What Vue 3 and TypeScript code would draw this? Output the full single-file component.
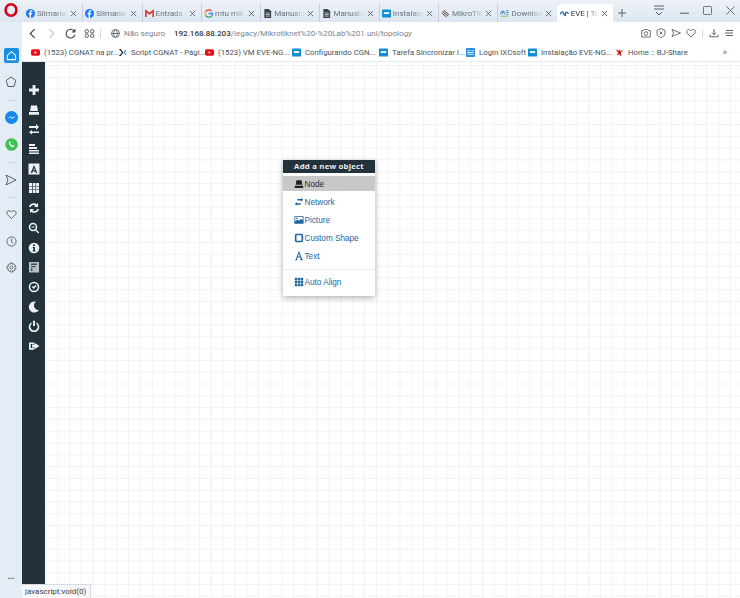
<script setup lang="ts">
interface Tab { title: string; icon: string; active?: boolean }
const tabs: Tab[] = [
  { title: 'Silmaria (', icon: 'fb' },
  { title: 'Silmaria (', icon: 'fb' },
  { title: 'Entrada (', icon: 'gm' },
  { title: 'mtu mik', icon: 'g' },
  { title: 'Manual:M', icon: 'doc' },
  { title: 'Manual:M', icon: 'doc' },
  { title: 'Instalaçã', icon: 'ixc' },
  { title: 'MikroTik', icon: 'mt' },
  { title: 'Downloa', icon: 'dl' },
  { title: 'EVE | Top', icon: 'eve', active: true },
]
const bookmarks = [
  { title: '(1523) CGNAT na pr...', icon: 'yt', w: 87 },
  { title: 'Script CGNAT - Pági...', icon: 'sc', w: 87 },
  { title: '(1523) VM EVE-NG...', icon: 'yt', w: 87 },
  { title: 'Configurando CGN...', icon: 'ixc', w: 87 },
  { title: 'Tarefa Sincronizar I...', icon: 'ixc', w: 87 },
  { title: 'Login IXCsoft', icon: 'lg', w: 62 },
  { title: 'Instalação EVE-NG...', icon: 'ixc', w: 87 },
  { title: 'Home :: BJ-Share', icon: 'bj', w: 80 },
]
const tools = ['plus', 'node', 'net', 'list', 'text', 'grid', 'sync', 'zoom', 'info', 'note', 'check', 'moon', 'power', 'out']
const menu = [
  { label: 'Node', icon: 'node', active: true },
  { label: 'Network', icon: 'net' },
  { label: 'Picture', icon: 'pic' },
  { label: 'Custom Shape', icon: 'shape' },
  { label: 'Text', icon: 'a' },
]
</script>

<template>
  <div class="browser">
    <header class="tabbar">
      <svg class="opera" viewBox="0 0 14 14"><ellipse cx="7" cy="7" rx="5.400" ry="5.700" fill="none" stroke="#d6001c" stroke-width="2.600" /></svg>
      <div class="tabs">
        <div v-for="(t, i) in tabs" :key="i" class="tab" :class="{ active: t.active }">
          <svg class="fav" viewBox="0 0 10 10">
            <template v-if="t.icon === 'fb'">
              <circle cx="5" cy="5" r="5" fill="#1878f2" />
              <path d="M5.600 10V6h1.300l.2-1.500H5.600v-1c0-.5.2-.8.8-.8h.8V1.400C7 1.400 6.600 1.300 6 1.300c-1.200 0-2 .7-2 2.100v1.100H2.800V6H4v4z" fill="#fff" />
            </template>
            <template v-else-if="t.icon === 'gm'">
              <path d="M1 9V2l4 3.200L9 2v7" fill="none" stroke="#d93025" stroke-width="1.700" />
            </template>
            <template v-else-if="t.icon === 'g'">
              <path d="M8.600 2.400A4.300 4.300 0 0 0 1.800 3" fill="none" stroke="#ea4335" stroke-width="1.500" />
              <path d="M1.800 3a4.300 4.300 0 0 0 0 4" fill="none" stroke="#fbbc05" stroke-width="1.500" />
              <path d="M1.800 7a4.300 4.300 0 0 0 6.700.8" fill="none" stroke="#34a853" stroke-width="1.500" />
              <path d="M8.500 7.800c.8-.8 1-1.800.9-2.800H5.200" fill="none" stroke="#4285f4" stroke-width="1.500" />
            </template>
            <template v-else-if="t.icon === 'doc'">
              <path d="M1.500 0h5l2.500 2.500V10H1.500z" fill="#3b4249" />
              <path d="M3 4.500h4.500M3 6.200h4.500M3 7.900h4.500" stroke="#fff" stroke-width=".7" />
            </template>
            <template v-else-if="t.icon === 'ixc'">
              <rect width="10" height="9" y=".5" rx="1" fill="#0e8fd6" />
              <rect x="2" y="3.500" width="6" height="2" fill="#fff" />
            </template>
            <template v-else-if="t.icon === 'mt'">
              <circle cx="5" cy="5" r="4.800" fill="#e6e6e6" />
              <path d="M1.500 2.500 8 8M3.200 1.500 8.800 6.500M1 4.500 6 9" stroke="#333" stroke-width="1" />
            </template>
            <template v-else-if="t.icon === 'dl'">
              <rect y="1" width="10" height="8" fill="#e7eef6" />
              <path d="M.5 6 2 2l1 3 1-3 1.500 4M6.500 2h3M7 4h2.500M7 6h2.500" fill="none" stroke="#3973b5" stroke-width=".9" />
              <path d="M.5 8h9" stroke="#7fb342" stroke-width="1" />
            </template>
            <template v-else>
              <path d="M.5 6C1.500 2.500 3 2.500 4 5s2 3 2 1 1-3.500 3.500-1" fill="none" stroke="#2a5da8" stroke-width="1.500" />
            </template>
          </svg>
          <span class="tab-title">{{ t.title }}</span>
          <svg class="x" viewBox="0 0 8 8"><path d="M1 1l6 6M7 1 1 7" stroke="#555f69" stroke-width="1" /></svg>
        </div>
        <svg class="new" viewBox="0 0 9 9"><path d="M4.500 0v9M0 4.500h9" stroke="#4a535c" stroke-width="1" /></svg>
      </div>
      <div class="win">
        <svg class="w1" viewBox="0 0 12 11"><path d="M1 1h10M1 4h10M3 7l3 3 3-3" fill="none" stroke="#58626c" stroke-width="1" /></svg>
        <svg class="w2" viewBox="0 0 10 10"><path d="M0 8h10" stroke="#58626c" stroke-width="1.200" /></svg>
        <svg class="w2" viewBox="0 0 10 10"><rect x=".5" y=".5" width="9" height="9" rx="1" fill="none" stroke="#58626c" /></svg>
        <svg class="w2" viewBox="0 0 10 10"><path d="M.5.5l9 9M9.500.5l-9 9" stroke="#58626c" stroke-width="1" /></svg>
      </div>
    </header>

    <div class="body">
      <aside class="rail">
        <div class="home">
          <svg viewBox="0 0 12 12"><path d="M1.500 6 6 1.800 10.500 6v4.500h-9z" fill="none" stroke="#fff" stroke-width="1.100" /></svg>
        </div>
        <svg class="r-ic star" viewBox="0 0 12 12"><path d="M6 1l4.800 3.500L9 10.500H3L1.200 4.500z" fill="none" stroke="#555f6b" stroke-width="1" /></svg>
        <span class="sep s1" />
        <svg class="r-ic msg" viewBox="0 0 12 12"><circle cx="6" cy="6" r="6" fill="#1687ef" /><path d="M2.500 7.500 5 4.800l1.700 1.400L9.500 4.500 7 7.300 5.300 5.800z" fill="#fff" /></svg>
        <svg class="r-ic wa" viewBox="0 0 12 12"><circle cx="6" cy="6" r="5.800" fill="#3ec454" /><path d="M4 3.300c-1 1-.4 2.500.8 3.800s2.700 1.900 3.500 1c.5-.6.300-1-.8-1.600-.5-.2-.7.500-1 .4C5.800 6.600 5.300 6 4.900 5.300c-.1-.3.500-.6.400-1-.4-1-.8-1.400-1.300-1z" fill="#fff" /></svg>
        <span class="sep s2" />
        <svg class="r-ic send" viewBox="0 0 12 12"><path d="M1 1l10 5-10 5 2-5z" fill="none" stroke="#555f6b" stroke-width="1" /></svg>
        <span class="sep s3" />
        <svg class="r-ic heart" viewBox="0 0 12 12"><path d="M6 10.500 1.500 6C0 4 1.500 1.800 3.500 1.800 4.800 1.800 5.600 2.600 6 3.300c.4-.7 1.200-1.500 2.500-1.500 2 0 3.500 2.200 2 4.200z" fill="none" stroke="#555f6b" stroke-width="1" /></svg>
        <svg class="r-ic clock" viewBox="0 0 12 12"><circle cx="6" cy="6" r="5" fill="none" stroke="#555f6b" /><path d="M6 3v3.300l2 1.400" fill="none" stroke="#555f6b" /></svg>
        <svg class="r-ic gear" viewBox="0 0 12 12"><circle cx="6" cy="6" r="1.700" fill="none" stroke="#555f6b" stroke-width=".9" /><path d="M5 1h2l.3 1.500 1.300-.6 1.400 1.400-.7 1.300L10.900 5v2l-1.600.4.700 1.300-1.400 1.400-1.300-.7L7 11H5l-.3-1.600-1.300.7L2 8.700l.7-1.300L1.100 7V5l1.600-.4L2 3.300l1.400-1.400 1.300.6z" fill="none" stroke="#555f6b" stroke-width=".9" /></svg>
        <span class="dots">•••</span>
      </aside>

      <main class="main">
        <nav class="toolbar">
          <svg class="nav first" viewBox="0 0 8 10"><path d="M6 1 2 5l4 4" fill="none" stroke="#3d4650" stroke-width="1.100" /></svg>
          <svg class="nav" viewBox="0 0 8 10"><path d="M2 1l4 4-4 4" fill="none" stroke="#c2c8ce" stroke-width="1.100" /></svg>
          <svg class="nav" viewBox="0 0 10 10"><path d="M8.500 3A4 4 0 1 0 9 6M9 1v2.500H6.500" fill="none" stroke="#3d4650" stroke-width="1" /></svg>
          <svg class="nav" viewBox="0 0 10 10"><g fill="none" stroke="#3d4650" stroke-width=".8"><rect x="1" y="1.500" width="3" height="3" rx="1.200" /><rect x="6" y="1.500" width="3" height="3" rx="1.200" /><rect x="1" y="5.500" width="3" height="3" rx="1.200" /><rect x="6" y="5.500" width="3" height="3" rx="1.200" /></g></svg>
          <i class="vr" />
          <svg class="globe" viewBox="0 0 10 10"><g fill="none" stroke="#3d4650" stroke-width=".8"><circle cx="5" cy="5" r="4.400" /><ellipse cx="5" cy="5" rx="2" ry="4.400" /><path d="M.6 5h8.800" /></g></svg>
          <span class="insecure">Não seguro</span>
          <span class="url"><b>192.168.88.203</b>/legacy/Mikrotiknet%20-%20Lab%201.unl/topology</span>
          <div class="actions">
            <svg viewBox="0 0 10 10"><path d="M.7 2.500h2l.7-1h3.200l.7 1h2v6.500H.7z" fill="none" stroke="#4a535c" stroke-width=".8" /><circle cx="5" cy="5.500" r="1.800" fill="none" stroke="#4a535c" stroke-width=".8" /></svg>
            <svg viewBox="0 0 10 10"><path d="M5 .7 9 2.200V6c0 1.800-2 3-4 3.400C3 9 1 7.800 1 6V2.200z" fill="none" stroke="#4a535c" stroke-width=".8" /><path d="M3.500 3.500l3 3M6.500 3.500l-3 3" stroke="#4a535c" stroke-width=".8" /></svg>
            <svg viewBox="0 0 10 10"><path d="M1 1.500 9.500 5 1 8.500 2.500 5z" fill="none" stroke="#4a535c" stroke-width=".8" /></svg>
            <svg viewBox="0 0 10 10"><path d="M5 9 1 5C0 3.300 1 1.500 2.800 1.500 3.900 1.500 4.600 2.200 5 2.800 5.400 2.200 6.100 1.500 7.200 1.500 9 1.500 10 3.300 9 5z" fill="none" stroke="#4a535c" stroke-width=".8" /></svg>
            <i class="vr" />
            <svg viewBox="0 0 10 10"><path d="M5 1v5.500M3 4.700l2 2 2-2M1 6.500v2.300h8V6.500" fill="none" stroke="#4a535c" stroke-width=".9" /></svg>
            <svg viewBox="0 0 10 10"><path d="M2 2.500h7M1 5h8M2 7.500h7" stroke="#4a535c" stroke-width=".9" /></svg>
          </div>
        </nav>

        <div class="bookmarks">
          <div v-for="(b, i) in bookmarks" :key="i" class="bm" :style="{ width: b.w + 'px' }">
            <svg class="fav" viewBox="0 0 10 10">
              <template v-if="b.icon === 'yt'">
                <rect y="1.500" width="10" height="7" rx="1.800" fill="#e8101a" /><path d="M4 3.500v3l2.600-1.500z" fill="#fff" />
              </template>
              <template v-else-if="b.icon === 'sc'">
                <path d="M1 1l3.500 4L1 9h2l3-4-3-4z" fill="#1b2730" /><path d="M9 2.500 6.500 5 9 7.500" fill="none" stroke="#3e9bd8" stroke-width="1.200" />
              </template>
              <template v-else-if="b.icon === 'ixc'">
                <rect y=".5" width="10" height="9" rx="1" fill="#0e8fd6" /><rect x="2" y="3.500" width="6" height="2" fill="#fff" />
              </template>
              <template v-else-if="b.icon === 'lg'">
                <rect width="10" height="10" rx="1" fill="#2f8fd6" /><path d="M1.500 3h3M6 3h2.500M1.500 7h7M1.500 5h7" stroke="#e9f4fb" stroke-width="1" />
              </template>
              <template v-else>
                <path d="M.5 1.500 4 3l1-2 .5 2.500L9.500 2 6.500 5 7 9.500 4.500 7 2 8.500 3.500 5z" fill="#d21a1f" />
              </template>
            </svg>
            <span>{{ b.title }}</span>
          </div>
          <span class="more">»</span>
        </div>

        <section class="canvas">
          <div class="sidebar">
            <svg v-for="name in tools" :key="name" class="tool" viewBox="0 0 12 12" fill="#eef1f3">
              <path v-if="name === 'plus'" d="M4.600 1h2.800v3.600H11v2.800H7.400V11H4.600V7.400H1V4.600h3.600z" />
              <path v-else-if="name === 'node'" d="M3 1.500h6L10 7H2zM1 8h10v2.800H1z" />
              <path v-else-if="name === 'net'" d="M1 3h7V1l3 3-3 3V5H1zM11 8.500H4V7L1 9.200 4 11.500V10h7z" />
              <path v-else-if="name === 'list'" d="M1 1h6v2H1zM1 4h8v2H1zM1 7h10v1.600H1zM1 9.500h10V11H1z" />
              <template v-else-if="name === 'text'">
                <path d="M.5.500h11v11H.500z" />
                <path fill="#22313a" d="M6 2 9.300 10H7.800l-.6-1.600H4.800L4.200 10H2.700zM5.200 7.200h1.600L6 5z" />
              </template>
              <path v-else-if="name === 'grid'" d="M1 1h3v3H1zM4.700 1h2.800v3H4.700zM8.100 1H11v3H8.100zM1 4.600h3v2.800H1zM4.700 4.600h2.800v2.800H4.700zM8.100 4.600H11v2.800H8.100zM1 8.100h3V11H1zM4.700 8.100h2.800V11H4.700zM8.100 8.100H11V11H8.100z" />
              <path v-else-if="name === 'sync'" d="M10 1v4H6l1.500-1.500A3.200 3.200 0 0 0 2.700 5H1a4.800 4.800 0 0 1 7.700-2.800zM2 11V7h4L4.500 8.500A3.200 3.200 0 0 0 9.300 7H11a4.800 4.800 0 0 1-7.700 2.800z" />
              <template v-else-if="name === 'zoom'">
                <circle cx="5" cy="5" r="3.500" fill="none" stroke="#eef1f3" stroke-width="1.600" />
                <path d="M3.500 4.400h3v1.200h-3zM7.700 7l3.600 3.500-1.100 1.100-3.500-3.600z" />
              </template>
              <template v-else-if="name === 'info'">
                <circle cx="6" cy="6" r="5.300" />
                <path fill="#22313a" d="M5 2.500h2v1.600H5zM4.700 5h2.300v3.400h.6v1H4.600v-1h.7V6h-.6z" />
              </template>
              <template v-else-if="name === 'note'">
                <rect x="1" y="1" width="10" height="10.500" fill="#b9c0c4" />
                <path fill="#3e4b53" d="M3 2.500h6v1.400H3zM3 5h4.500v1.300H3zM3 7.300h1.400V10H3z" />
              </template>
              <template v-else-if="name === 'check'">
                <circle cx="6" cy="6" r="4.500" fill="none" stroke="#eef1f3" stroke-width="1.600" />
                <path d="M3.800 6 5 5l.8.8 1.700-1.800L8.600 5 5.800 8z" />
              </template>
              <path v-else-if="name === 'moon'" d="M8 .8A5.500 5.500 0 1 0 11 9A4.500 4.500 0 0 1 8 .8z" />
              <path v-else-if="name === 'power'" d="M5 .8h2v5.200H5zM3.500 2.300v2A3.500 3.500 0 1 0 8.500 4.300v-2a5.300 5.300 0 1 1-5 0z" />
              <path v-else d="M1 2.500h5v1.600H2.700v4H6v1.600H1zM6.500 4.500V2.800L11.500 6 6.500 9.200V7.500H4v-3z" />
            </svg>
          </div>

          <div class="ctx">
            <div class="ctx-head">Add a new object</div>
            <ul class="ctx-list">
              <li v-for="m in menu" :key="m.label" :class="{ on: m.active }">
                <svg class="ctx-ic" viewBox="0 0 12 12" :fill="m.active ? '#222' : '#21669f'">
                  <path v-if="m.icon === 'node'" d="M3 1.500h6L10 7H2zM1 8h10v2.800H1z" />
                  <path v-else-if="m.icon === 'net'" d="M4 2.400h4.500V1L11 3.300 8.500 5.600V4.200H4zM8 7.400H3.500V6L1 8.300l2.500 2.300V9.200H8z" />
                  <path v-else-if="m.icon === 'pic'" fill-rule="evenodd" d="M.5 1.500h11v9H.5zM1.500 2.500v5l2.500-2 2 1.500 2.500-2.500 2 1.800V2.500zM3.500 3a1 1 0 1 1 0 2 1 1 0 0 1 0-2z" />
                  <path v-else-if="m.icon === 'shape'" fill-rule="evenodd" d="M3 1h6a2 2 0 0 1 2 2v6a2 2 0 0 1-2 2H3a2 2 0 0 1-2-2V3a2 2 0 0 1 2-2zM3 2.800v6.400h6V2.800z" />
                  <path v-else d="M6.300.5 9.800 10l1 .4v.8H7.300v-.8l.9-.4-.7-2.200H4.200l-.7 2.200.9.400v.8H1.200v-.8l1-.4L5.500.5zM4.600 6.600h2.500L5.900 3.100z" />
                </svg>
                <span>{{ m.label }}</span>
              </li>
              <li class="div" />
              <li class="align">
                <svg class="ctx-ic" viewBox="0 0 12 12" fill="#21669f"><path d="M1 1h3v3H1zM4.700 1h2.800v3H4.700zM8.100 1H11v3H8.100zM1 4.600h3v2.800H1zM4.700 4.600h2.800v2.800H4.700zM8.100 4.600H11v2.800H8.100zM1 8.100h3V11H1zM4.700 8.100h2.800V11H4.700zM8.100 8.100H11V11H8.100z" /></svg>
                <span>Auto Align</span>
              </li>
            </ul>
          </div>

          <div class="status">javascript:void(0)</div>
        </section>
      </main>
    </div>
  </div>
</template>

<style>
html, body { margin: 0; padding: 0; }
</style>

<style scoped>
.browser { width: 740px; height: 598px; display: flex; flex-direction: column; overflow: hidden; background: #e4ecf5; font-family: Roboto, "Open Sans", sans-serif; color: #4a535c; }
.tabbar { height: 22px; display: flex; align-items: flex-start; flex: none; background: linear-gradient(#edf2f8, #dde6f1); }
.opera { width: 14px; height: 14px; margin: 3px 0 0 4px; flex: none; }
.tabs { display: flex; align-items: flex-start; margin-left: 6px; height: 22px; }
.tab { width: 59.300px; height: 18px; margin-top: 4px; box-sizing: border-box; display: flex; align-items: center; padding: 0 5px 0 2px; border-right: 1px solid #c6cfd9; font-size: 8px; color: #6a747e; }
.tab.active { width: 56px; background: #fff; border: 0; border-radius: 3px 3px 0 0; padding-left: 3px; margin-right: 4px; margin-left: -1px; color: #333; }
.fav { width: 9px; height: 9px; flex: none; }
.tab-title { flex: 1; min-width: 0; margin-left: 2px; white-space: nowrap; -webkit-mask-image: linear-gradient(90deg, #000 60%, transparent 100%); mask-image: linear-gradient(90deg, #000 60%, transparent 100%); }
.x { width: 7px; height: 7px; flex: none; margin-left: 2px; }
.new { width: 8px; height: 8px; margin: 9px 0 0 1px; flex: none; }
.win { display: flex; margin-left: auto; align-items: flex-start; padding: 5px 5px 0 0; gap: 14px; }
.w1 { width: 12px; height: 11px; margin-right: 1px; }
.w2 { width: 9px; height: 9px; margin-top: 1px; }

.body { flex: 1; display: flex; min-height: 0; }
.rail { width: 22px; flex: none; display: flex; flex-direction: column; align-items: center; background: #e4ecf5; }
.home { width: 15px; height: 15px; margin-top: 26px; border-radius: 2px; background: #1c8fe0; display: flex; align-items: center; justify-content: center; flex: none; }
.home svg { width: 11px; height: 11px; }
.r-ic { width: 11px; height: 11px; flex: none; }
.sep { width: 7px; height: 1px; background: #cbd4de; flex: none; }
.star { width: 12px; height: 12px; margin-top: 13px; }
.s1 { margin-top: 12px; }
.msg { width: 13px; height: 13px; margin-top: 9.500px; }
.wa { width: 13px; height: 13px; margin-top: 14px; }
.s2 { margin-top: 11.500px; }
.send { width: 12px; height: 12px; margin-top: 11px; }
.s3 { margin-top: 11px; }
.heart { margin-top: 10.500px; }
.clock { margin-top: 16px; }
.gear { margin-top: 15px; }
.dots { margin-top: auto; margin-bottom: 15px; font-size: 7px; line-height: 8px; color: #56616c; }

.main { flex: 1; min-width: 0; display: flex; flex-direction: column; background: #fff; }
.toolbar { height: 21px; flex: none; display: flex; align-items: center; padding: 1px 6px 0 0; box-sizing: border-box; font-size: 8px; }
.nav { width: 11px; height: 11px; margin-right: 8px; flex: none; }
.nav.first { margin-left: 5px; }
.vr { width: 1px; height: 9px; background: #d3d9df; flex: none; }
.toolbar > .vr { margin-left: -3px; }
.globe { width: 9px; height: 9px; margin-left: 10px; flex: none; }
.insecure { margin-left: 4px; color: #79828b; width: 50px; white-space: nowrap; flex: none; }
.url { color: #7b848d; white-space: nowrap; }
.url b { font-weight: 500; color: #2f3840; }
.actions { margin-left: auto; display: flex; align-items: center; gap: 5px; }
.actions svg { width: 10px; height: 10px; }
.actions .vr { margin: 0 1px; }
.bookmarks { height: 19px; flex: none; display: flex; align-items: center; padding-left: 9px; font-size: 7.800px; border-bottom: 1px solid #e7ebef; box-sizing: border-box; }
.bm { display: flex; align-items: center; white-space: nowrap; flex: none; }
.bm span { margin-left: 4px; }
.more { margin-left: auto; margin-right: 13px; font-size: 9px; color: #5d666f; }

.canvas { flex: 1; min-height: 0; position: relative; display: flex; background-color: #fff; background-image: linear-gradient(#f1f2f4 1px, transparent 1px), linear-gradient(90deg, #f1f2f4 1px, transparent 1px); background-size: 11.800px 11.800px; background-position: 0 3px; }
.sidebar { width: 23px; height: 523px; flex: none; background: #22313a; display: flex; flex-direction: column; align-items: center; padding-top: 22px; gap: 7.700px; box-sizing: border-box; }
.tool { width: 12px; height: 12px; flex: none; }

.ctx { position: absolute; left: 261px; top: 98px; width: 92px; height: 136px; background: #fff; box-shadow: 0 2px 6px rgba(0, 0, 0, .3); font-family: "Liberation Sans", Arial, sans-serif; font-size: 8.200px; }
.ctx-head { height: 13px; background: #22313a; color: #e8edf0; font-family: "Open Sans", sans-serif; font-weight: 700; font-size: 7.800px; line-height: 12px; text-align: center; letter-spacing: .2px; }
.ctx-list { list-style: none; margin: 3px 0 0; padding: 0; color: #21669f; }
.ctx-list li { height: 18px; display: flex; align-items: center; padding-left: 11px; box-sizing: border-box; }
.ctx-list li.on { height: 15px; background: #c8c8c8; color: #2b2b2b; margin-bottom: 2px; }
.ctx-list li span { padding-top: 1px; }
.ctx-ic { width: 10px; height: 10px; flex: none; margin-right: .5px; }
.ctx-list li.div { height: 1px; padding: 0; background: #eceef0; margin: 4px 0 0; }
.ctx-list li.align { margin-top: 3px; }
.status { position: absolute; left: 0; bottom: 0; height: 13px; width: 65px; padding-left: 3px; background: #f6f7f8; border: 1px solid #d8dadd; border-width: 1px 1px 0 0; font-size: 8px; line-height: 13px; color: #3c4349; white-space: nowrap; }
</style>
